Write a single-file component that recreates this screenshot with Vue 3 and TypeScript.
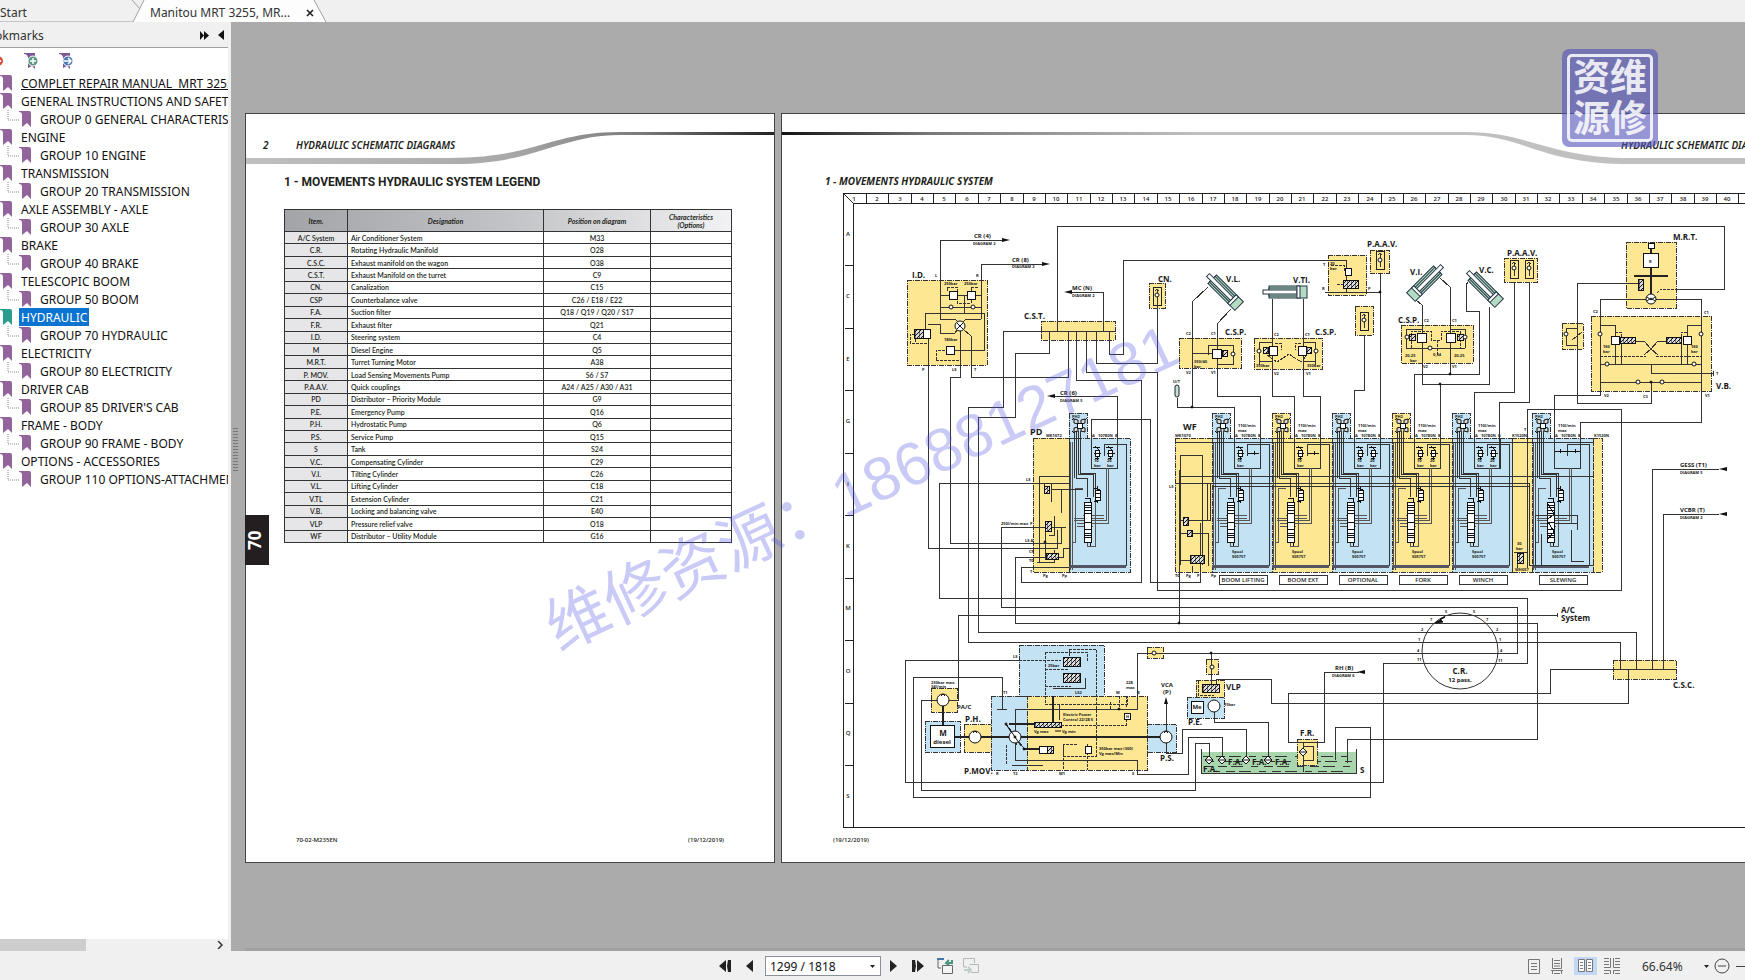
<script setup lang="ts">
import { ref } from 'vue'

interface Bookmark { title: string; child?: boolean; root?: boolean }
interface Box { x: number; y: number; w: number; h: number; c: 'y' | 'b' }
interface Label { x: number; y: number; t: string; s?: 'xs' | 'sm' | 'md' | 'lg' | 'xl'; a?: 'middle' }

const bookmarks: Bookmark[] = [
  { title: 'COMPLET REPAIR MANUAL  MRT 3255', root: true },
  { title: 'GENERAL INSTRUCTIONS AND SAFETY' },
  { title: 'GROUP 0 GENERAL CHARACTERISTICS', child: true },
  { title: 'ENGINE' },
  { title: 'GROUP 10 ENGINE', child: true },
  { title: 'TRANSMISSION' },
  { title: 'GROUP 20 TRANSMISSION', child: true },
  { title: 'AXLE ASSEMBLY - AXLE' },
  { title: 'GROUP 30 AXLE', child: true },
  { title: 'BRAKE' },
  { title: 'GROUP 40 BRAKE', child: true },
  { title: 'TELESCOPIC BOOM' },
  { title: 'GROUP 50 BOOM', child: true },
  { title: 'HYDRAULIC' },
  { title: 'GROUP 70 HYDRAULIC', child: true },
  { title: 'ELECTRICITY' },
  { title: 'GROUP 80 ELECTRICITY', child: true },
  { title: 'DRIVER CAB' },
  { title: "GROUP 85 DRIVER'S CAB", child: true },
  { title: 'FRAME - BODY' },
  { title: 'GROUP 90 FRAME - BODY', child: true },
  { title: 'OPTIONS - ACCESSORIES' },
  { title: 'GROUP 110 OPTIONS-ATTACHMENTS', child: true },
]
const selected = ref('HYDRAULIC')
const pageField = ref('1299 / 1818')

const legend: [string, string, string][] = [
  ['A/C System', 'Air Conditioner System', 'M33'],
  ['C.R.', 'Rotating Hydraulic Manifold', 'O28'],
  ['C.S.C.', 'Exhaust manifold on the wagon', 'O38'],
  ['C.S.T.', 'Exhaust Manifold on the turret', 'C9'],
  ['CN.', 'Canalization', 'C15'],
  ['CSP', 'Counterbalance valve', 'C26 / E18 / E22'],
  ['F.A.', 'Suction filter', 'Q18 / Q19 / Q20 / S17'],
  ['F.R.', 'Exhaust filter', 'Q21'],
  ['I.D.', 'Steering system', 'C4'],
  ['M', 'Diesel Engine', 'Q5'],
  ['M.R.T.', 'Turret Turning Motor', 'A38'],
  ['P. MOV.', 'Load Sensing Movements Pump', 'S6 / S7'],
  ['P.A.A.V.', 'Quick couplings', 'A24 / A25 / A30 / A31'],
  ['PD', 'Distributor – Priority Module', 'G9'],
  ['P.E.', 'Emergency Pump', 'Q16'],
  ['P.H.', 'Hydrostatic Pump', 'Q6'],
  ['P.S.', 'Service Pump', 'Q15'],
  ['S', 'Tank', 'S24'],
  ['V.C.', 'Compensating Cylinder', 'C29'],
  ['V.I.', 'Tilting Cylinder', 'C26'],
  ['V.L.', 'Lifting Cylinder', 'C18'],
  ['V.TL', 'Extension Cylinder', 'C21'],
  ['V.B.', 'Locking and balancing valve', 'E40'],
  ['VLP', 'Pressure relief valve', 'O18'],
  ['WF', 'Distributor – Utility Module', 'G16'],
]

const columns = Array.from({ length: 43 }, (_, i) => ({
  n: i + 1,
  line: Math.round(867 + 22.37 * i),
  mid: i === 0 ? 855 : Math.round(856 + 22.37 * i),
}))
const rows = ['A', 'C', 'E', 'G', 'I', 'K', 'M', 'O', 'Q', 'S'].map((n, i) => ({
  n,
  y: Math.round(236 + 62.4 * i),
  tick: Math.round(265 + 62.5 * i),
}))

const boxes: Box[] = [
  { x: 908, y: 280, w: 80, h: 85, c: 'y' },
  { x: 1042, y: 321, w: 74, h: 19, c: 'y' },
  { x: 1150, y: 283, w: 16, h: 25, c: 'y' },
  { x: 1180, y: 338, w: 62, h: 30, c: 'y' },
  { x: 1255, y: 338, w: 68, h: 31, c: 'y' },
  { x: 1329, y: 255, w: 38, h: 40, c: 'y' },
  { x: 1371, y: 250, w: 19, h: 23, c: 'y' },
  { x: 1356, y: 306, w: 18, h: 29, c: 'y' },
  { x: 1402, y: 325, w: 72, h: 38, c: 'y' },
  { x: 1505, y: 258, w: 33, h: 24, c: 'y' },
  { x: 1627, y: 242, w: 50, h: 66, c: 'y' },
  { x: 1563, y: 323, w: 21, h: 26, c: 'y' },
  { x: 1592, y: 316, w: 120, h: 75, c: 'y' },
  { x: 1034, y: 438, w: 36, h: 134, c: 'y' },
  { x: 1176, y: 438, w: 37, h: 134, c: 'y' },
  { x: 1513, y: 438, w: 20, h: 134, c: 'y' },
  { x: 1594, y: 438, w: 9, h: 134, c: 'y' },
  { x: 932, y: 688, w: 26, h: 24, c: 'y' },
  { x: 926, y: 721, w: 35, h: 31, c: 'b' },
  { x: 965, y: 724, w: 27, h: 28, c: 'y' },
  { x: 992, y: 696, w: 36, h: 74, c: 'b' },
  { x: 1020, y: 645, w: 85, h: 51, c: 'b' },
  { x: 1028, y: 696, w: 120, h: 74, c: 'y' },
  { x: 1148, y: 724, w: 29, h: 28, c: 'b' },
  { x: 1148, y: 647, w: 16, h: 11, c: 'y' },
  { x: 1207, y: 659, w: 12, h: 15, c: 'y' },
  { x: 1197, y: 680, w: 28, h: 17, c: 'y' },
  { x: 1188, y: 697, w: 37, h: 21, c: 'b' },
  { x: 1614, y: 660, w: 63, h: 19, c: 'y' },
]

const modules = [
  { x: 1070, w: 61, c: 'b', name: '', both: true },
  { x: 1213, w: 60, c: 'b', name: 'BOOM LIFTING', both: false },
  { x: 1273, w: 60, c: 'y', name: 'BOOM EXT', both: false },
  { x: 1333, w: 60, c: 'b', name: 'OPTIONAL', both: true },
  { x: 1393, w: 60, c: 'y', name: 'FORK', both: true },
  { x: 1453, w: 60, c: 'b', name: 'WINCH', both: true },
  { x: 1533, w: 61, c: 'b', name: 'SLEWING', both: false },
]

const wires: string[] = [
  /* steering unit and turret manifold */
  'M941 319V240H1004', 'M982 319V264H1044', 'M929 338V548H1058V530', 'M961 331V377H951V543H1062V527',
  'M972 336V377H1069V331', 'M1004 331H1116', 'M1004 331V407H969V642H1621V669', 'M1050 331V353H1016V417H979V632H1637V669',
  'M1070 292H1104V331', 'M1058 331V226H1725V289H1678', 'M1077 331V380H1142V582H1022V567H1070',
  'M1087 331V372H1158V590H1622V409H1528V568', 'M1097 331V363H1158V295', 'M1110 331V354H1124V260H1347V292',
  'M1056 396H1118V468',
  /* actuator feeds */
  'M1209 287L1193 302V407', 'M1178 398V407H1235V468', 'M1232 309L1218 324V396H1261V468',
  'M1273 299V396H1295V468', 'M1304 299V396H1321V468', 'M1326 292H1381', 'M1381 273V468', 'M1365 335V390H1355V468',
  'M1441 278L1451 287V374', 'M1417 300L1423 305V384H1490V307', 'M1469 282L1467 285V311H1480V374H1415V468',
  'M1441 384V468', 'M1515 282V392H1475V468', 'M1530 282V402H1500V468',
  'M1639 283H1578V403H1652V390', 'M1601 390V395H1555V468', 'M1601 390V299H1702V422H1581V468',
  /* return manifolds */
  'M1720 469H1653V669', 'M1720 514H1664V669', 'M1614 669H1677', 'M1614 669H1551V693H1289V742H1325V672H1360',
  'M1629 669V703H1272V679H1217V690',
  /* distributors to the rotary joint */
  'M1070 483H940V598H1528V663H1384V782H906V660H1020', 'M1067 527H1002V607H1518V653H1138V709H1016V760H1138V774H1189V737H1223V757',
  'M1043 557H1016V623H1538V739H1348V763', 'M1558 615H959V700H950', 'M1151 419H1092V468', 'M1151 419V582H1201V523', 'M1180 470V623',
  'M939 700H922V790H1196V743H1210V757', 'M1003 709V677H914V797H1371V727H1336V760',
  'M1167 743V753H1183V729H1247V757', 'M1215 712V722H1269V757', 'M1212 653V690', 'M1167 731V702',
  'M1558 613V617',
]

/* internal piping drawn inside the coloured blocks */
const details: string[] = [
  'M941 319H956L959 322M982 319H967L964 322M941 295H982M941 307H982M926 329V313H985V350H955M965 295V313',
  'M941 333H956L959 329M964 329L972 336M929 324H941V333M916 342V334',
  'M1193 338V407M1193 353H1214M1209 355V345H1234V364H1218M1158 304V290',
  'M1273 338V369M1304 338V369M1260 365V342H1273M1316 365V342H1304M1260 361H1273M1304 361H1316',
  'M1423 325V384M1451 325V374M1407 348V329H1423M1466 348V329H1451M1407 348H1466',
  'M1567 339V328H1578M1567 339V345H1578M1573 340L1583 332',
  'M1601 325H1616V332M1702 325H1688V332M1616 332V364M1622 343V364M1682 343V364M1688 332V364M1601 364H1702',
  'M1652 364V373H1714M1601 382H1702M1652 382V390M1636 341H1645L1652 349L1659 341H1668M1652 349L1645 355M1652 349L1659 355',
  'M1714 371V376',
  'M1040 563V476H1070M1052 483V502M1052 489H1062V513M1062 489H1084M1045 483V490M1055 516V535H1050M1038 562H1055V550M1070 442V566M1043 557H1064V548H1070M1046 527V560',
  'M1181 565V455H1203V565M1181 476H1213M1208 483V520M1205 483H1213M1181 520H1211V483M1181 533H1209V566M1193 566V572M1181 560H1193',
  'M1176 442H1594M1213 476H1594M1176 483H1530V565H1594M1213 486H1530',
  'M1536 515H1578V530M1536 515V565M1555 523H1578M1572 530V561H1585M1542 534V565M1515 552H1528M1518 556V568',
  'M1016 709V731M1007 724L1026 750M1003 707V709M998 709H1008M1013 765H1044M1025 749H1039',
  'M1060 704V720M1054 688H1085M1086 678V688H1060',
  'M1304 742V772M1304 746H1314V760H1304M1314 748V758',
]
const dashed: string[] = [
  'M948 291V287H958V303H972V287H980', 'M937 360V350H948M937 360H961V350', 'M916 334H911V343H929M961 331V365',
  'M1601 356H1647M1657 356H1702', 'M1616 332H1622V341M1688 332H1682V341', 'M1658 293L1662 289H1678',
  'M1276 343H1282V350M1302 343H1296V350M1268 355L1278 362L1290 354L1302 362L1308 355',
  'M1412 348V331H1432V340H1442V331H1461V348M1438 340V355', 'M1332 265H1345V272M1338 284H1345',
  'M1020 660H1062M1046 652H1088V662M1046 652V704H1128V696M1070 649H1097V756H1064V744M1078 744H1064V770M1070 649V656M1046 669H1070M1046 686H1072',
  'M1088 744V770M1062 725H1127V716M1127 696V708M1120 696V710M1111 702V710M1007 745V764M1018 745L1013 738',
  'M1199 681V695H1215',
]
const circles = [
  [961, 326, 5], [952, 307, 2], [974, 307, 2], [1158, 295, 2], [1381, 260, 2], [1365, 320, 2], [1515, 268, 2], [1530, 268, 2],
  [1234, 354, 2], [1260, 351, 2], [1317, 351, 2], [1408, 337, 2], [1466, 337, 2], [1431, 348, 2], [1567, 334, 2],
  [1652, 299, 5], [1601, 334, 2], [1702, 334, 2], [1608, 364, 2], [1695, 364, 2], [1639, 382, 2], [1663, 382, 2],
  [944, 700, 6], [976, 737, 6], [1016, 737, 6], [1167, 737, 6], [1215, 706, 6], [1155, 653, 2], [1213, 667, 2],
]
const squares = [
  [950, 291, 8, 8], [968, 291, 8, 8], [924, 329, 7, 9], [947, 346, 8, 8], [1213, 349, 9, 9], [1270, 346, 8, 9], [1299, 346, 8, 9],
  [1418, 333, 9, 9], [1447, 333, 9, 9], [1649, 243, 6, 5], [1644, 253, 15, 14], [1612, 336, 8, 8], [1684, 336, 8, 8],
  [931, 725, 24, 22], [1192, 701, 12, 12], [1125, 713, 6, 6], [1086, 746, 6, 7], [1040, 746, 8, 7], [1346, 268, 6, 7],
]
const darkParts = [
  [915, 329, 9, 9], [1344, 280, 15, 8], [1621, 337, 15, 6], [1667, 337, 15, 6], [1639, 279, 5, 11],
  [1064, 657, 17, 9], [1064, 673, 17, 9], [1035, 722, 27, 5], [1048, 746, 6, 7], [1046, 521, 6, 10], [1045, 486, 5, 7],
  [1047, 553, 12, 6], [1184, 517, 5, 8], [1188, 530, 5, 6], [1191, 555, 14, 8], [1518, 553, 6, 10], [1203, 684, 17, 8],
  [1223, 350, 5, 6], [1264, 347, 5, 6], [1307, 347, 5, 6], [1410, 334, 6, 6], [1458, 334, 6, 6],
]
const couplers = [[1154, 287], [1377, 251], [1361, 312], [1511, 260], [1526, 260]]
const dots = [[1193, 407], [1441, 384], [1451, 374], [1180, 623], [1212, 653], [1381, 292], [1652, 382], [1046, 542], [1016, 737], [1120, 709], [1007, 724], [1025, 749]]

/* [x, y, direction] with x, y at the tip */
const arrows = [[1011, 240, 1], [1051, 264, 1], [1065, 292, -1], [1048, 396, -1], [1720, 469, -1], [1720, 514, -1], [1358, 672, -1]]
const cylinders = [[1209, 275, 45], [1264, 292, 0], [1443, 266, 135], [1469, 272, 45]]

const labels: Label[] = [
  { x: 975, y: 238, t: 'CR (4)', s: 'sm' }, { x: 974, y: 245, t: 'DIAGRAM 2', s: 'xs' },
  { x: 1013, y: 262, t: 'CR (8)', s: 'sm' }, { x: 1013, y: 268, t: 'DIAGRAM 2', s: 'xs' },
  { x: 1073, y: 290, t: 'MC (N)', s: 'sm' }, { x: 1073, y: 297, t: 'DIAGRAM 2', s: 'xs' },
  { x: 1061, y: 395, t: 'CR (6)', s: 'sm' }, { x: 1061, y: 402, t: 'DIAGRAM 5', s: 'xs' },
  { x: 1681, y: 467, t: 'GESS (T1)', s: 'sm' }, { x: 1681, y: 474, t: 'DIAGRAM 5', s: 'xs' },
  { x: 1681, y: 512, t: 'VCBR (T)', s: 'sm' }, { x: 1681, y: 519, t: 'DIAGRAM 2', s: 'xs' },
  { x: 1336, y: 670, t: 'RH (B)', s: 'sm' }, { x: 1333, y: 677, t: 'DIAGRAM 6', s: 'xs' },
  { x: 913, y: 278, t: 'I.D.' }, { x: 1025, y: 319, t: 'C.S.T.' }, { x: 1159, y: 282, t: 'CN.' },
  { x: 1227, y: 282, t: 'V.L.' }, { x: 1226, y: 335, t: 'C.S.P.' }, { x: 1294, y: 283, t: 'V.TI.' },
  { x: 1316, y: 335, t: 'C.S.P.' }, { x: 1368, y: 247, t: 'P.A.A.V.' }, { x: 1411, y: 275, t: 'V.I.' },
  { x: 1399, y: 323, t: 'C.S.P.' }, { x: 1480, y: 273, t: 'V.C.' }, { x: 1508, y: 256, t: 'P.A.A.V.' },
  { x: 1674, y: 240, t: 'M.R.T.' }, { x: 1717, y: 389, t: 'V.B.' }, { x: 1031, y: 435, t: 'PD', s: 'md' },
  { x: 1184, y: 430, t: 'WF', s: 'md' }, { x: 1562, y: 613, t: 'A/C' }, { x: 1562, y: 621, t: 'System' },
  { x: 1674, y: 688, t: 'C.S.C.' }, { x: 1461, y: 674, t: 'C.R.', a: 'middle' }, { x: 1461, y: 682, t: '12 pass.', s: 'sm', a: 'middle' },
  { x: 1301, y: 736, t: 'F.R.' }, { x: 1361, y: 773, t: 'S' }, { x: 1204, y: 772, t: 'F.A.' }, { x: 1229, y: 765, t: 'F.A.' },
  { x: 1253, y: 765, t: 'F.A.' }, { x: 1276, y: 765, t: 'F.A.' }, { x: 958, y: 709, t: 'PA/C', s: 'sm' }, { x: 966, y: 722, t: 'P.H.' },
  { x: 965, y: 774, t: 'P.MOV.' }, { x: 1161, y: 761, t: 'P.S.' }, { x: 1189, y: 725, t: 'P.E.' }, { x: 1227, y: 690, t: 'VLP' },
  { x: 1168, y: 687, t: 'VCA', s: 'sm', a: 'middle' }, { x: 1168, y: 694, t: '(P)', s: 'sm', a: 'middle' },
  { x: 944, y: 736, t: 'M', a: 'middle' }, { x: 943, y: 744, t: 'diesel', s: 'sm', a: 'middle' }, { x: 1198, y: 709, t: 'Me', s: 'sm', a: 'middle' },
  { x: 936, y: 277, t: 'L', s: 'xs' }, { x: 977, y: 277, t: 'R', s: 'xs' }, { x: 923, y: 371, t: 'P', s: 'xs' }, { x: 953, y: 371, t: 'LS', s: 'xs' },
  { x: 975, y: 371, t: 'T', s: 'xs' }, { x: 945, y: 285, t: '250bar', s: 'xs' }, { x: 965, y: 285, t: '250bar', s: 'xs' }, { x: 945, y: 341, t: '180bar', s: 'xs' },
  { x: 1187, y: 335, t: 'C2', s: 'xs' }, { x: 1212, y: 335, t: 'C1', s: 'xs' }, { x: 1187, y: 374, t: 'V2', s: 'xs' }, { x: 1212, y: 374, t: 'V1', s: 'xs' },
  { x: 1195, y: 363, t: '350/40', s: 'xs' }, { x: 1195, y: 368, t: 'bar', s: 'xs' }, { x: 1174, y: 383, t: 'U/T', s: 'xs' },
  { x: 1275, y: 336, t: 'C2', s: 'xs' }, { x: 1306, y: 336, t: 'C1', s: 'xs' }, { x: 1275, y: 375, t: 'V2', s: 'xs' }, { x: 1307, y: 375, t: 'V1', s: 'xs' },
  { x: 1257, y: 367, t: '350bar', s: 'xs' }, { x: 1308, y: 367, t: '350bar', s: 'xs' }, { x: 1324, y: 266, t: 'T', s: 'xs' }, { x: 1331, y: 265, t: '20', s: 'xs' },
  { x: 1331, y: 270, t: 'bar', s: 'xs' }, { x: 1323, y: 290, t: 'R', s: 'xs' }, { x: 1369, y: 290, t: 'P', s: 'xs' },
  { x: 1425, y: 322, t: 'C2', s: 'xs' }, { x: 1453, y: 322, t: 'C1', s: 'xs' }, { x: 1424, y: 368, t: 'V2', s: 'xs' }, { x: 1453, y: 368, t: 'V1', s: 'xs' },
  { x: 1406, y: 357, t: '20-25', s: 'xs' }, { x: 1411, y: 362, t: 'bar', s: 'xs' }, { x: 1434, y: 356, t: '0,34', s: 'xs' }, { x: 1455, y: 357, t: '20-25', s: 'xs' },
  { x: 1594, y: 313, t: 'C2', s: 'xs' }, { x: 1705, y: 314, t: 'C1', s: 'xs' }, { x: 1605, y: 397, t: 'V2', s: 'xs' }, { x: 1644, y: 398, t: 'C3', s: 'xs' },
  { x: 1706, y: 397, t: 'V1', s: 'xs' }, { x: 1717, y: 375, t: 'T', s: 'xs' }, { x: 1604, y: 348, t: '160', s: 'xs' }, { x: 1604, y: 353, t: 'bar', s: 'xs' },
  { x: 1692, y: 348, t: '160', s: 'xs' }, { x: 1692, y: 353, t: 'bar', s: 'xs' }, { x: 1650, y: 263, t: 'R', s: 'xs' },
  { x: 1047, y: 437, t: 'WK1072', s: 'xs' }, { x: 1176, y: 437, t: 'WK1070', s: 'xs' }, { x: 1513, y: 437, t: 'K1520N', s: 'xs' }, { x: 1595, y: 437, t: 'K1520N', s: 'xs' },
  { x: 1525, y: 431, t: 'T', s: 'xs' }, { x: 1518, y: 545, t: '30', s: 'xs' }, { x: 1517, y: 550, t: 'bar', s: 'xs' }, { x: 1516, y: 571, t: 'WH057', s: 'xs' },
  { x: 1027, y: 481, t: 'LS', s: 'xs' }, { x: 1002, y: 525, t: '250l/min max', s: 'xs' }, { x: 1031, y: 525, t: 'P', s: 'xs' }, { x: 1026, y: 542, t: 'LS A', s: 'xs' },
  { x: 1030, y: 553, t: 'CF', s: 'xs' }, { x: 1030, y: 562, t: 'T0', s: 'xs' }, { x: 1031, y: 573, t: 'T', s: 'xs' }, { x: 1044, y: 577, t: 'Pg', s: 'xs' },
  { x: 1063, y: 577, t: 'Pp', s: 'xs' }, { x: 1170, y: 488, t: 'LS', s: 'xs' }, { x: 1176, y: 577, t: 'T0', s: 'xs' }, { x: 1187, y: 577, t: 'Pg', s: 'xs' },
  { x: 1198, y: 577, t: 'P', s: 'xs' }, { x: 1212, y: 577, t: 'Pp', s: 'xs' }, { x: 1014, y: 658, t: 'LS', s: 'xs' }, { x: 1004, y: 694, t: 'T1', s: 'xs' },
  { x: 932, y: 684, t: '230bar max.', s: 'xs' }, { x: 932, y: 688, t: '34l/min', s: 'xs' }, { x: 997, y: 775, t: 'R', s: 'xs' }, { x: 1014, y: 775, t: 'T2', s: 'xs' },
  { x: 1060, y: 775, t: 'M1', s: 'xs' }, { x: 1133, y: 775, t: 'S', s: 'xs' }, { x: 1117, y: 694, t: 'M', s: 'xs' }, { x: 1138, y: 694, t: 'B', s: 'xs' },
  { x: 1127, y: 684, t: '228', s: 'xs' }, { x: 1127, y: 689, t: 'max', s: 'xs' }, { x: 1064, y: 716, t: 'Electric Power', s: 'xs' }, { x: 1064, y: 721, t: 'Control 22/28 S', s: 'xs' },
  { x: 1035, y: 733, t: 'Vg max', s: 'xs' }, { x: 1063, y: 733, t: 'Vg min', s: 'xs' }, { x: 1100, y: 750, t: '350bar max (300)', s: 'xs' }, { x: 1100, y: 755, t: 'Vg max/Min', s: 'xs' },
  { x: 1049, y: 667, t: '25bar', s: 'xs' }, { x: 1076, y: 694, t: 'LS2', s: 'xs' }, { x: 1225, y: 706, t: '15bar', s: 'xs' }, { x: 1127, y: 718, t: 'H', s: 'xs' },
  { x: 1446, y: 613, t: '5', s: 'xs' }, { x: 1474, y: 613, t: '5', s: 'xs' }, { x: 1431, y: 621, t: '7', s: 'xs' }, { x: 1487, y: 621, t: '7', s: 'xs' },
  { x: 1422, y: 631, t: '2', s: 'xs' }, { x: 1497, y: 631, t: '2', s: 'xs' }, { x: 1419, y: 641, t: '1', s: 'xs' }, { x: 1500, y: 641, t: '1', s: 'xs' },
  { x: 1418, y: 652, t: '4', s: 'xs' }, { x: 1501, y: 652, t: '4', s: 'xs' }, { x: 1418, y: 661, t: '11', s: 'xs' }, { x: 1499, y: 662, t: '11', s: 'xs' },
]
</script>

<template>
  <div class="app">
    <nav class="tabs" aria-label="Documents">
      <svg class="tab-shapes" width="340" height="22" aria-hidden="true">
        <path d="M133 22L144 0H314L326 22Z" fill="#fdfdfd" />
        <path d="M133 22L144 0M132 0L140 9M314 0L326 22" fill="none" stroke="#a0a0a0" />
        <path d="M0 22H133" stroke="#9a9a9a" />
      </svg>
      <button class="tab start">Start</button>
      <button class="tab current">Manitou MRT 3255, MR...</button>
      <button class="close" aria-label="Close tab">
        <svg width="8" height="8" viewBox="0 0 8 8"><path d="M1 1L7 7M7 1L1 7" stroke="#222" stroke-width="1.6" /></svg>
      </button>
    </nav>

    <div class="body">
      <aside class="sidebar">
        <header class="side-head">
          <span class="side-title">Bookmarks</span>
          <button aria-label="Expand panel"><svg width="9" height="9" viewBox="0 0 9 9"><path d="M0 0L4 4.500L0 9ZM4 0L9 4.500L4 9Z" fill="#111" /></svg></button>
          <button aria-label="Collapse panel"><svg width="6" height="10" viewBox="0 0 6 10"><path d="M6 0V10L0 5Z" fill="#111" /></svg></button>
        </header>
        <div class="side-tools">
          <button class="cut" aria-label="Delete bookmark"><svg width="4" height="16" viewBox="0 0 4 16"><circle cx="-2" cy="8" r="5" fill="#d9503c" /><path d="M0 8H1" stroke="#fff" stroke-width="2" /></svg></button>
          <button aria-label="Add bookmark">
            <svg width="15" height="17" viewBox="0 0 15 17"><path d="M0 0H11V16L8 13L4 15V4Q3 1 0 1Z" fill="#7d5796" /><circle cx="9" cy="8" r="5" fill="#5a9a7e" stroke="#fff" /><path d="M6 8H12M9 5V11" stroke="#fff" stroke-width="1.500" /></svg>
          </button>
          <button aria-label="Go to bookmark">
            <svg width="15" height="17" viewBox="0 0 15 17"><path d="M0 0H11V16L8 13L4 15V4Q3 1 0 1Z" fill="#7d5796" /><circle cx="9" cy="8" r="5" fill="#4a78b4" stroke="#fff" /><path d="M5 8H11M9 5L12 8L9 11" stroke="#fff" stroke-width="1.500" fill="none" /></svg>
          </button>
        </div>
        <ul class="tree">
          <li v-for="b in bookmarks" :key="b.title" :class="{ child: b.child, root: b.root, on: selected === b.title }">
            <svg v-if="b.child" class="link" width="12" height="12" aria-hidden="true"><path d="M1 0V10H12" fill="none" stroke="#888" stroke-dasharray="1 1" /></svg>
            <svg class="mark" width="12" height="16" viewBox="0 0 12 16" aria-hidden="true"><path d="M0 0H10Q12 0 12 2V16L8 12L3 16V4Q3 1 0 1Z" /></svg>
            <button @click="selected = b.title">{{ b.title }}</button>
          </li>
        </ul>
        <div class="hscroll">
          <span class="thumb"></span>
          <svg width="6" height="8" viewBox="0 0 6 8"><path d="M1 0L5 4L1 8" fill="none" stroke="#333" stroke-width="1.500" /></svg>
        </div>
      </aside>
      <div class="splitter"><span></span></div>

      <main class="workspace">
        <section class="page legend-page">
          <svg class="page-head" width="528" height="52" viewBox="246 114 528 52">
            <defs>
              <linearGradient id="swoosh" x1="246" x2="774" y1="0" y2="0" gradientUnits="userSpaceOnUse">
                <stop offset="0" stop-color="#c0c0c0" /><stop offset="0.500" stop-color="#a8a8a8" /><stop offset="0.750" stop-color="#7a7a7a" /><stop offset="1" stop-color="#222" />
              </linearGradient>
            </defs>
            <path d="M246 158H450C535 158 550 132 620 132H774V135H620C560 135 535 164 455 164H246Z" fill="url(#swoosh)" />
            <text class="running" x="263" y="149">2</text>
            <text class="running" x="296" y="149">HYDRAULIC SCHEMATIC DIAGRAMS</text>
          </svg>
          <h1>1 - MOVEMENTS HYDRAULIC SYSTEM LEGEND</h1>
          <table>
            <colgroup><col class="c1" /><col class="c2" /><col class="c3" /><col class="c4" /></colgroup>
            <thead>
              <tr><th>Item.</th><th>Designation</th><th>Position on diagram</th><th>Characteristics (Options)</th></tr>
            </thead>
            <tbody>
              <tr v-for="r in legend" :key="r[0]"><td>{{ r[0] }}</td><td>{{ r[1] }}</td><td>{{ r[2] }}</td><td></td></tr>
            </tbody>
          </table>
          <footer><span>70-02-M235EN</span><span>(19/12/2019)</span></footer>
          <div class="chapter">70</div>
        </section>

        <section class="page">
          <svg class="drawing" width="1056" height="748" viewBox="783 114 1056 748">
            <defs>
              <linearGradient id="bar" x1="782" x2="1200" y1="0" y2="0" gradientUnits="userSpaceOnUse">
                <stop offset="0" stop-color="#111" /><stop offset="0.350" stop-color="#777" /><stop offset="1" stop-color="#c0c0c0" />
              </linearGradient>
              <pattern id="hatch" width="4" height="4" patternUnits="userSpaceOnUse">
                <rect width="4" height="4" fill="#ddd" /><path d="M0 4L4 0M0 0V4" stroke="#111" />
              </pattern>
            </defs>
            <path d="M782 132H1467C1530 132 1550 158 1633 158H1839V164H1633C1540 164 1525 135 1467 135H782Z" fill="url(#bar)" />
            <text class="running" x="1622" y="149">HYDRAULIC SCHEMATIC DIAGRAMS</text>
            <text class="sheet-title" x="826" y="185">1 - MOVEMENTS HYDRAULIC SYSTEM</text>

            <g class="crisp frame">
              <path d="M1839 193H844V827H1839M1839 203H854V827M844 193L854 203" />
              <path v-for="c in columns" :key="c.n" :d="`M${c.line} 193V203`" />
              <path v-for="r in rows.slice(0, 9)" :key="r.n" :d="`M846 ${r.tick}H854`" />
            </g>
            <g class="scale">
              <text v-for="c in columns" :key="c.n" :x="c.mid" y="201">{{ c.n }}</text>
              <text v-for="r in rows" :key="r.n" x="849" :y="r.y">{{ r.n }}</text>
            </g>

            <g class="crisp">
              <rect v-for="(b, i) in boxes" :key="i" :x="b.x" :y="b.y" :width="b.w" :height="b.h" :class="['block', b.c]" />
              <path d="M1202 752H1357V773H1202Z" fill="#a9d6ac" />
              <path class="water" d="M1204 756H1354M1208 761H1354M1206 766H1354M1214 771H1350" />
              <path class="wire" d="M1202 749V773H1357V749" />
              <rect x="1298" y="739" width="20" height="26" class="block y" />
            </g>

            <g v-for="m in modules" :key="m.x" :transform="`translate(${m.x} 0)`" class="crisp">
              <rect x="0" y="438" :width="m.w" height="134" :class="['block', m.c]" />
              <rect x="0" y="413" width="18" height="25" :class="['block', m.c]" />
              <path class="wire" d="M22 438V468H48V438M35 456V444H57V566M5 431V478M7 431V478H18V497M9 431V474H24V497M11 431V473H26V490" />
              <path class="wire soft" d="M1 442V570M3 442V566M37 468V520H5M39 468V523H8M14 488H6V542H3V570M26 500V546H18V541M14 515H35M5 518H35M8 526H24" />
              <path class="bus" d="M0 566H57" />
              <path class="smooth" d="M5 419L9 420L9 424L5 423ZM16 419L12 420L12 424L16 423ZM5 432L9 431L9 427L5 428ZM16 432L12 431L12 427L16 428Z" />
              <rect x="8" y="423" width="5" height="5" class="part" />
              <path class="fine" d="M3 420L5 418M3 431L5 433M18 418L16 420" />
              <rect x="15" y="502" width="7" height="40" class="spool" />
              <path class="fine" d="M15 505H22M15 507H22M15 510H22M15 513H22M15 522H22M15 529H22M15 533H22M15 535H22M15 537H22M16 498H21V502M16 542H21V546" />
              <path v-if="m.name === 'SLEWING'" class="fine" d="M15 502L22 514L15 520L22 532L15 540" />
              <rect x="26" y="490" width="5" height="10" class="part" />
              <path class="fine" d="M26 493H31M26 497H31M28 486V490M28 500V503M25 488L31 490M25 502L31 500" />
              <template v-if="m.name !== 'SLEWING'">
                <rect x="26" y="450" width="4" height="6" class="part" />
                <path class="fine" d="M26 446L30 450M25 453H32M28 456V460M24 447H31M26 458H30" />
                <text class="t xs" x="25" y="462">10</text><text class="t xs" x="25" y="467">bar</text>
                <template v-if="m.both">
                  <rect x="39" y="450" width="4" height="6" class="part" />
                  <path class="fine" d="M39 446L43 450M38 453H46M41 456V460M37 447H44M39 458H43" />
                  <text class="t xs" x="38" y="462">20</text><text class="t xs" x="38" y="467">bar</text>
                </template>
                <path v-else class="fine" d="M36 453H47M42 451V455" />
              </template>
              <path v-else class="fine" d="M22 451H48M28 449V453M43 449V453" />
              <text class="t xs" x="3" y="418">PH2</text>
              <text class="t xs" x="23" y="437">A</text><text class="t xs" x="29" y="437">10780N</text><text class="t xs" x="46" y="437">B</text>
              <template v-if="m.name">
                <text class="t xs" x="26" y="427">110l/min</text><text class="t xs" x="26" y="432">max</text>
                <text class="t xs" x="20" y="553">Spool</text><text class="t xs" x="20" y="558">S05757</text>
                <rect x="7" y="575" width="48" height="9" class="tag" />
                <text class="tag-text" x="31" y="582">{{ m.name }}</text>
              </template>
            </g>

            <g class="crisp">
              <path v-for="w in wires" :key="w" class="wire" :d="w" />
              <path v-for="w in details" :key="w" class="wire" :d="w" />
              <path v-for="w in dashed" :key="w" class="wire dash" :d="w" />
              <path class="shaft" d="M955 737H1162M944 706V725M1054 696V722M1010 724H1036M1025 749H1040" />
              <path class="shaft" d="M1635 276H1669M1652 248V253M1652 267V294" />
              <rect v-for="(s, i) in darkParts" :key="i" class="dark" :x="s[0]" :y="s[1]" :width="s[2]" :height="s[3]" />
              <rect v-for="(s, i) in squares" :key="i" class="part" :x="s[0]" :y="s[1]" :width="s[2]" :height="s[3]" />
              <g v-for="(c, i) in couplers" :key="i" :transform="`translate(${c[0]} ${c[1]})`">
                <rect width="8" height="18" fill="none" stroke="#222" /><path class="wire" d="M4 2V16M2 4L4 2L6 4" />
              </g>
            </g>

            <circle cx="1461" cy="651" r="38" fill="none" stroke="#333" />
            <path d="M1436 623L1446 617L1441 619L1444 622Z" fill="#111" stroke="#111" />
            <circle v-for="(c, i) in circles" :key="i" class="node" :cx="c[0]" :cy="c[1]" :r="c[2]" />
            <path d="M1010 728L1022 746M1007 724L1012 732M1648 297L1652 300L1656 297M1648 301L1652 298L1656 301M958 323L964 329M958 329L964 323M942 696L944 694L946 696M974 733L976 731L978 733M1165 733L1167 731L1169 733" fill="none" stroke="#111" />
            <path d="M1056 731H1062" stroke="#111" />
            <circle v-for="(d, i) in dots" :key="i" :cx="d[0]" :cy="d[1]" r="1" fill="#111" stroke="#111" />
            <path v-for="x in [1210, 1223, 1247, 1269, 1304]" :key="x" class="filter" :transform="`translate(${x} ${x === 1304 ? 752 : 760})`" d="M0 -4L4 0L0 4L-4 0ZM-4 0H4" />
            <path v-for="(a, i) in arrows" :key="i" fill="#111" :transform="`translate(${a[0]} ${a[1]}) scale(${a[2]} 1)`" d="M0 0L-8 -2V2Z" />
            <path d="M1167 697L1165 704H1169Z" fill="#111" />
            <rect x="1176" y="385" width="4" height="12" rx="2" fill="#bfe0dc" stroke="#222" />
            <g v-for="(c, i) in cylinders" :key="i" :transform="`translate(${c[0]} ${c[1]}) rotate(${c[2]})`" stroke="#234" fill="#b4dcc2">
              <rect x="6" y="-6" width="38" height="12" /><rect x="6" y="-4" width="29" height="8" />
              <rect x="0" y="-2" width="34" height="4" fill="#fff" /><rect x="34" y="-6" width="3" height="12" fill="#fff" />
            </g>
            <text v-for="(l, i) in labels" :key="i" :class="['t', l.s ?? 'lg']" :x="l.x" :y="l.y" :text-anchor="l.a">{{ l.t }}</text>
            <text class="foot" x="834" y="842">(19/12/2019)</text>
          </svg>
        </section>

        <div class="watermark">维修资源：<span>18688127181</span></div>
        <div class="stamp"><span>资维</span><span>源修</span></div>
      </main>
    </div>

    <footer class="status">
      <div class="pager">
        <button aria-label="First page"><svg width="12" height="12" viewBox="0 0 12 12"><path d="M7 0V12L0 6ZM9 0H12V12H9L8 6Z" fill="#222" /></svg></button>
        <button aria-label="Previous page"><svg width="7" height="12" viewBox="0 0 7 12"><path d="M7 0V12L0 6Z" fill="#222" /></svg></button>
        <div class="combo">
          <input v-model="pageField" aria-label="Page" />
          <button aria-label="Page list"><svg width="5" height="3" viewBox="0 0 5 3"><path d="M0 0H5L2.500 3Z" fill="#222" /></svg></button>
        </div>
        <button class="next" aria-label="Next page"><svg width="7" height="12" viewBox="0 0 7 12"><path d="M0 0V12L7 6Z" fill="#222" /></svg></button>
        <button aria-label="Last page"><svg width="12" height="12" viewBox="0 0 12 12"><path d="M5 0V12L12 6ZM0 0H3L4 6L3 12H0Z" fill="#222" /></svg></button>
        <button class="view-nav" aria-label="Previous view">
          <svg width="16" height="16" viewBox="0 0 16 16" fill="none"><path d="M4 10H1V1H7" stroke="#666" /><path d="M0 1H7" stroke="#3f78a8" stroke-width="2" /><path d="M5.500 7.500H15.500V15.500H5.500Z" fill="#f4f4f4" stroke="#666" /><path d="M15 2V5H9M12 2L9 5L12 7" stroke="#4c9480" stroke-width="2" /></svg>
        </button>
        <button class="view-nav" aria-label="Next view" disabled>
          <svg width="16" height="16" viewBox="0 0 16 16" fill="none" stroke="#b4b8b6"><path d="M4 9H0.500V0.500H11.500V5" /><path d="M6.500 6.500H15.500V14.500H8" /><path d="M1 12H7M5 9L8 12L5 15" stroke="#bcd0c8" stroke-width="2" /></svg>
        </button>
      </div>
      <div class="views">
        <button aria-label="Single page"><svg width="12" height="15" viewBox="0 0 12 15" fill="none" stroke="#777"><path d="M0.500 0.500H11.500V14.500H0.500ZM3 4.500H9M3 7.500H9M3 10.500H9" /></svg></button>
        <button aria-label="Continuous"><svg width="12" height="16" viewBox="0 0 12 16" fill="none" stroke="#777"><path d="M1.500 0V10.500H10.500V0M3 2.500H9M3 5.500H9M3 8H9M0 12.500H12M1.500 16V12.500M10.500 12.500V16M3 15.500H9" /></svg></button>
        <button class="on" aria-label="Facing"><svg width="15" height="14" viewBox="0 0 15 14" fill="#fff" stroke="#777"><path d="M0.500 0.500H6.500V12.500H0.500ZM8.500 0.500H14.500V12.500H8.500ZM2 3.500H5M2 6.500H5M2 9.500H5M10 3.500H13M10 6.500H13M10 9.500H13" /></svg></button>
        <button aria-label="Continuous facing"><svg width="16" height="16" viewBox="0 0 16 16" fill="none" stroke="#777"><path d="M0 0.500H5M0 3.500H5M0 6.500H5M0 9.500H6.500V0M9.500 0V9.500H16M11 0.500H16M11 3.500H16M11 6.500H16M0 12.500H6.500V16M16 12.500H9.500V16M0 15.500H5M11 15.500H16" /></svg></button>
      </div>
      <span class="zoom">66.64%</span>
      <button class="zoom-menu" aria-label="Zoom level"><svg width="5" height="3" viewBox="0 0 5 3"><path d="M0 0H5L2.500 3Z" fill="#222" /></svg></button>
      <button class="zoom-out" aria-label="Zoom out"><svg width="16" height="16" viewBox="0 0 16 16" fill="none" stroke="#444"><circle cx="8" cy="8" r="7" /><path d="M4 8H12" /></svg></button>
      <span class="track"></span>
    </footer>
  </div>
</template>

<style>
body { margin: 0; overflow: hidden; }
</style>

<style scoped>
* { box-sizing: border-box; }
.app { display: flex; flex-direction: column; height: 100vh; background: #f0f0f0; font-family: "Noto Sans", "DejaVu Sans", sans-serif; font-size: 12px; color: #111; overflow: hidden; }
button { border: 0; padding: 0; background: none; font: inherit; color: inherit; display: inline-flex; align-items: center; }
svg { display: block; flex: none; }

.tabs { position: relative; flex: none; display: flex; align-items: center; height: 22px; }
.tab-shapes { position: absolute; left: 0; top: 0; }
.tab { position: relative; color: #333; line-height: 16px; margin-top: 3px; }
.start { width: 150px; }
.current { width: 156px; }
.close { position: relative; margin-top: 4px; }

.body { flex: 1; min-height: 0; display: flex; }
.sidebar { flex: none; width: 228px; background: #fff; display: flex; flex-direction: column; overflow: hidden; }
.side-head { flex: none; display: flex; align-items: center; gap: 9px; height: 26px; padding: 1px 4px 0 0; background: #f0f0f0; border-bottom: 1px solid #a0a0a0; color: #333; }
.side-title { flex: 1; margin-left: -20px; }
.side-tools { flex: none; display: flex; align-items: center; gap: 20px; height: 26px; }
.tree { flex: 1; margin: 0; padding: 0; list-style: none; overflow: hidden; }
.tree li { position: relative; display: flex; align-items: center; height: 18px; white-space: pre; }
.tree button { height: 18px; margin-left: 7px; padding: 0 2px; flex: none; }
.mark { fill: #93639b; }
.child { padding-left: 19px; }
.link { position: absolute; left: 7px; top: 0; }
.root button { text-decoration: underline; }
.on button { background: #0b74d0; color: #fff; }
.on .mark { fill: #2a9d8f; }
.hscroll { flex: none; display: flex; align-items: center; justify-content: space-between; height: 12px; padding-right: 5px; background: #f0f0f0; }
.thumb { width: 86px; height: 12px; background: #cdcdcd; }
.splitter { flex: none; width: 17px; display: flex; align-items: center; justify-content: flex-end; padding-right: 7px; background: #ababab; border-left: 3px solid #f0f0f0; }
.splitter span { width: 5px; height: 44px; margin-bottom: 74px; background: repeating-linear-gradient(180deg, #777 0 1px, #ababab 1px 3px); }

.workspace { position: relative; flex: 1; min-width: 0; display: flex; align-items: flex-start; gap: 6px; padding: 91px 0 0; overflow: hidden; background: #ababab; border-bottom: 3px solid #a0a0a0; }
.page { position: relative; flex: none; background: #fff; border: 1px solid #444; font-family: "Open Sans", "Noto Sans", sans-serif; color: #231f20; }
.legend-page { display: flex; flex-direction: column; width: 530px; height: 750px; }
h1 { margin: 5px 0 0 38px; font: 700 12px/22px Roboto, "Open Sans", sans-serif; }
.running { font: italic 600 10px "Noto Sans", "Open Sans", sans-serif; fill: #231f20; }
.sheet-title { font: italic 700 10px "Open Sans", sans-serif; fill: #231f20; }
table { margin: 16px 0 0 38px; width: 447px; height: 334px; border-collapse: collapse; table-layout: fixed; font: 600 7px/8px Lato, "Open Sans", sans-serif; }
.c1 { width: 63px; }
.c2 { width: 196px; }
.c3 { width: 107px; }
.c4 { width: 81px; }
thead tr { height: 22px; background: linear-gradient(90deg, #a3a4a7, #c2c3c6 50%, #f2f2f4); }
th, td { padding: 0 3px; border: 1px solid #333; text-align: center; }
th { font-style: italic; font-weight: 700; padding: 0 15px; }
td:first-child { background: #e6e6e9; }
td:nth-child(2) { text-align: left; }
.legend-page footer { display: flex; justify-content: space-between; margin: auto 50px 16px 50px; font-size: 6px; line-height: 12px; font-weight: 600; }
.chapter { position: absolute; left: -1px; top: 401px; width: 24px; height: 50px; background: #231f20; color: #fff; font-size: 17px; font-weight: 700; line-height: 20px; text-align: center; writing-mode: vertical-rl; transform: rotate(180deg); }

.crisp { shape-rendering: crispEdges; }
.frame path { fill: none; stroke: #222; }
.scale text { font: 600 6px "Open Sans", sans-serif; fill: #222; text-anchor: middle; }
.block { stroke: #333; stroke-dasharray: 5 1 1 1; }
.y { fill: #fde792; }
.b { fill: #c3e3f5; }
.wire { fill: none; stroke: #333; }
.soft { stroke: #555; }
.dash { stroke-dasharray: 3 1; }
.bus { fill: none; stroke: #556; stroke-width: 3; }
.fine { fill: none; stroke: #111; }
.smooth { fill: #ddd; stroke: #111; shape-rendering: auto; }
.shaft { fill: none; stroke: #222; stroke-width: 2; }
.water { fill: none; stroke: #333; stroke-dasharray: 7 6 9 4 12 8; }
.part { fill: #fff; stroke: #111; }
.spool { fill: #fff; stroke: #111; }
.dark { fill: url(#hatch); stroke: #111; }
.node { fill: #fff; stroke: #111; }
.filter { fill: #fff; stroke: #111; }
.tag { fill: #fff; stroke: #333; }
.tag-text { font: 600 6px "Open Sans", sans-serif; fill: #222; text-anchor: middle; }
.t { fill: #1a1a1a; font-family: "Open Sans", "Noto Sans", sans-serif; font-weight: 700; }
.xs { font-size: 4px; }
.sm { font-size: 6px; }
.lg { font-size: 8px; }
.md { font-size: 9px; }
.foot { font: 600 6px "Open Sans", sans-serif; fill: #231f20; }

.watermark { position: absolute; left: 305px; top: 565px; font: 63px/90px "Liberation Sans", "Noto Sans CJK SC", sans-serif; color: rgba(80, 80, 225, 0.3); white-space: nowrap; transform: rotate(-25deg); transform-origin: left center; pointer-events: none; }
.watermark span { font-size: 61px; }
.stamp { position: absolute; left: 1317px; top: 27px; width: 96px; height: 98px; padding-bottom: 4px; border-radius: 7px; background: rgba(82, 80, 185, 0.6); color: rgba(255, 255, 255, 0.85); font: 700 37px/41px "Noto Sans CJK SC", sans-serif; display: flex; flex-direction: column; align-items: center; justify-content: center; pointer-events: none; }
.stamp::before { content: ""; position: absolute; inset: 5px; border: 3px solid rgba(255, 255, 255, 0.85); border-radius: 5px; }

.status { flex: none; display: flex; align-items: center; height: 29px; padding-top: 1px; background: #f0f0f0; color: #333; }
.pager { flex: 1; display: flex; align-items: center; justify-content: center; gap: 12px; padding-left: 167px; }
.pager > button:first-child, .pager > button:nth-child(5) { margin: 0 3px; }
.pager > .next { margin-left: -3px; }
.pager > .view-nav { margin-left: -2px; }
.combo { display: flex; align-items: center; width: 116px; height: 20px; padding-right: 5px; background: #fff; border: 1px solid #8a9098; }
.combo input { flex: 1; min-width: 0; border: 0; padding: 0 0 0 4px; background: none; outline: 0; font: inherit; color: #111; }
.views { display: flex; align-items: center; gap: 11px; }
.views .on { padding: 2px 4px; background: #c2d8f4; }
.views button:last-child { margin-left: -4px; }
.zoom { width: 62px; margin-left: 22px; }
.zoom-menu { margin-right: 5px; }
.track { width: 9px; height: 1px; margin-left: 6px; background: #444; }
</style>
